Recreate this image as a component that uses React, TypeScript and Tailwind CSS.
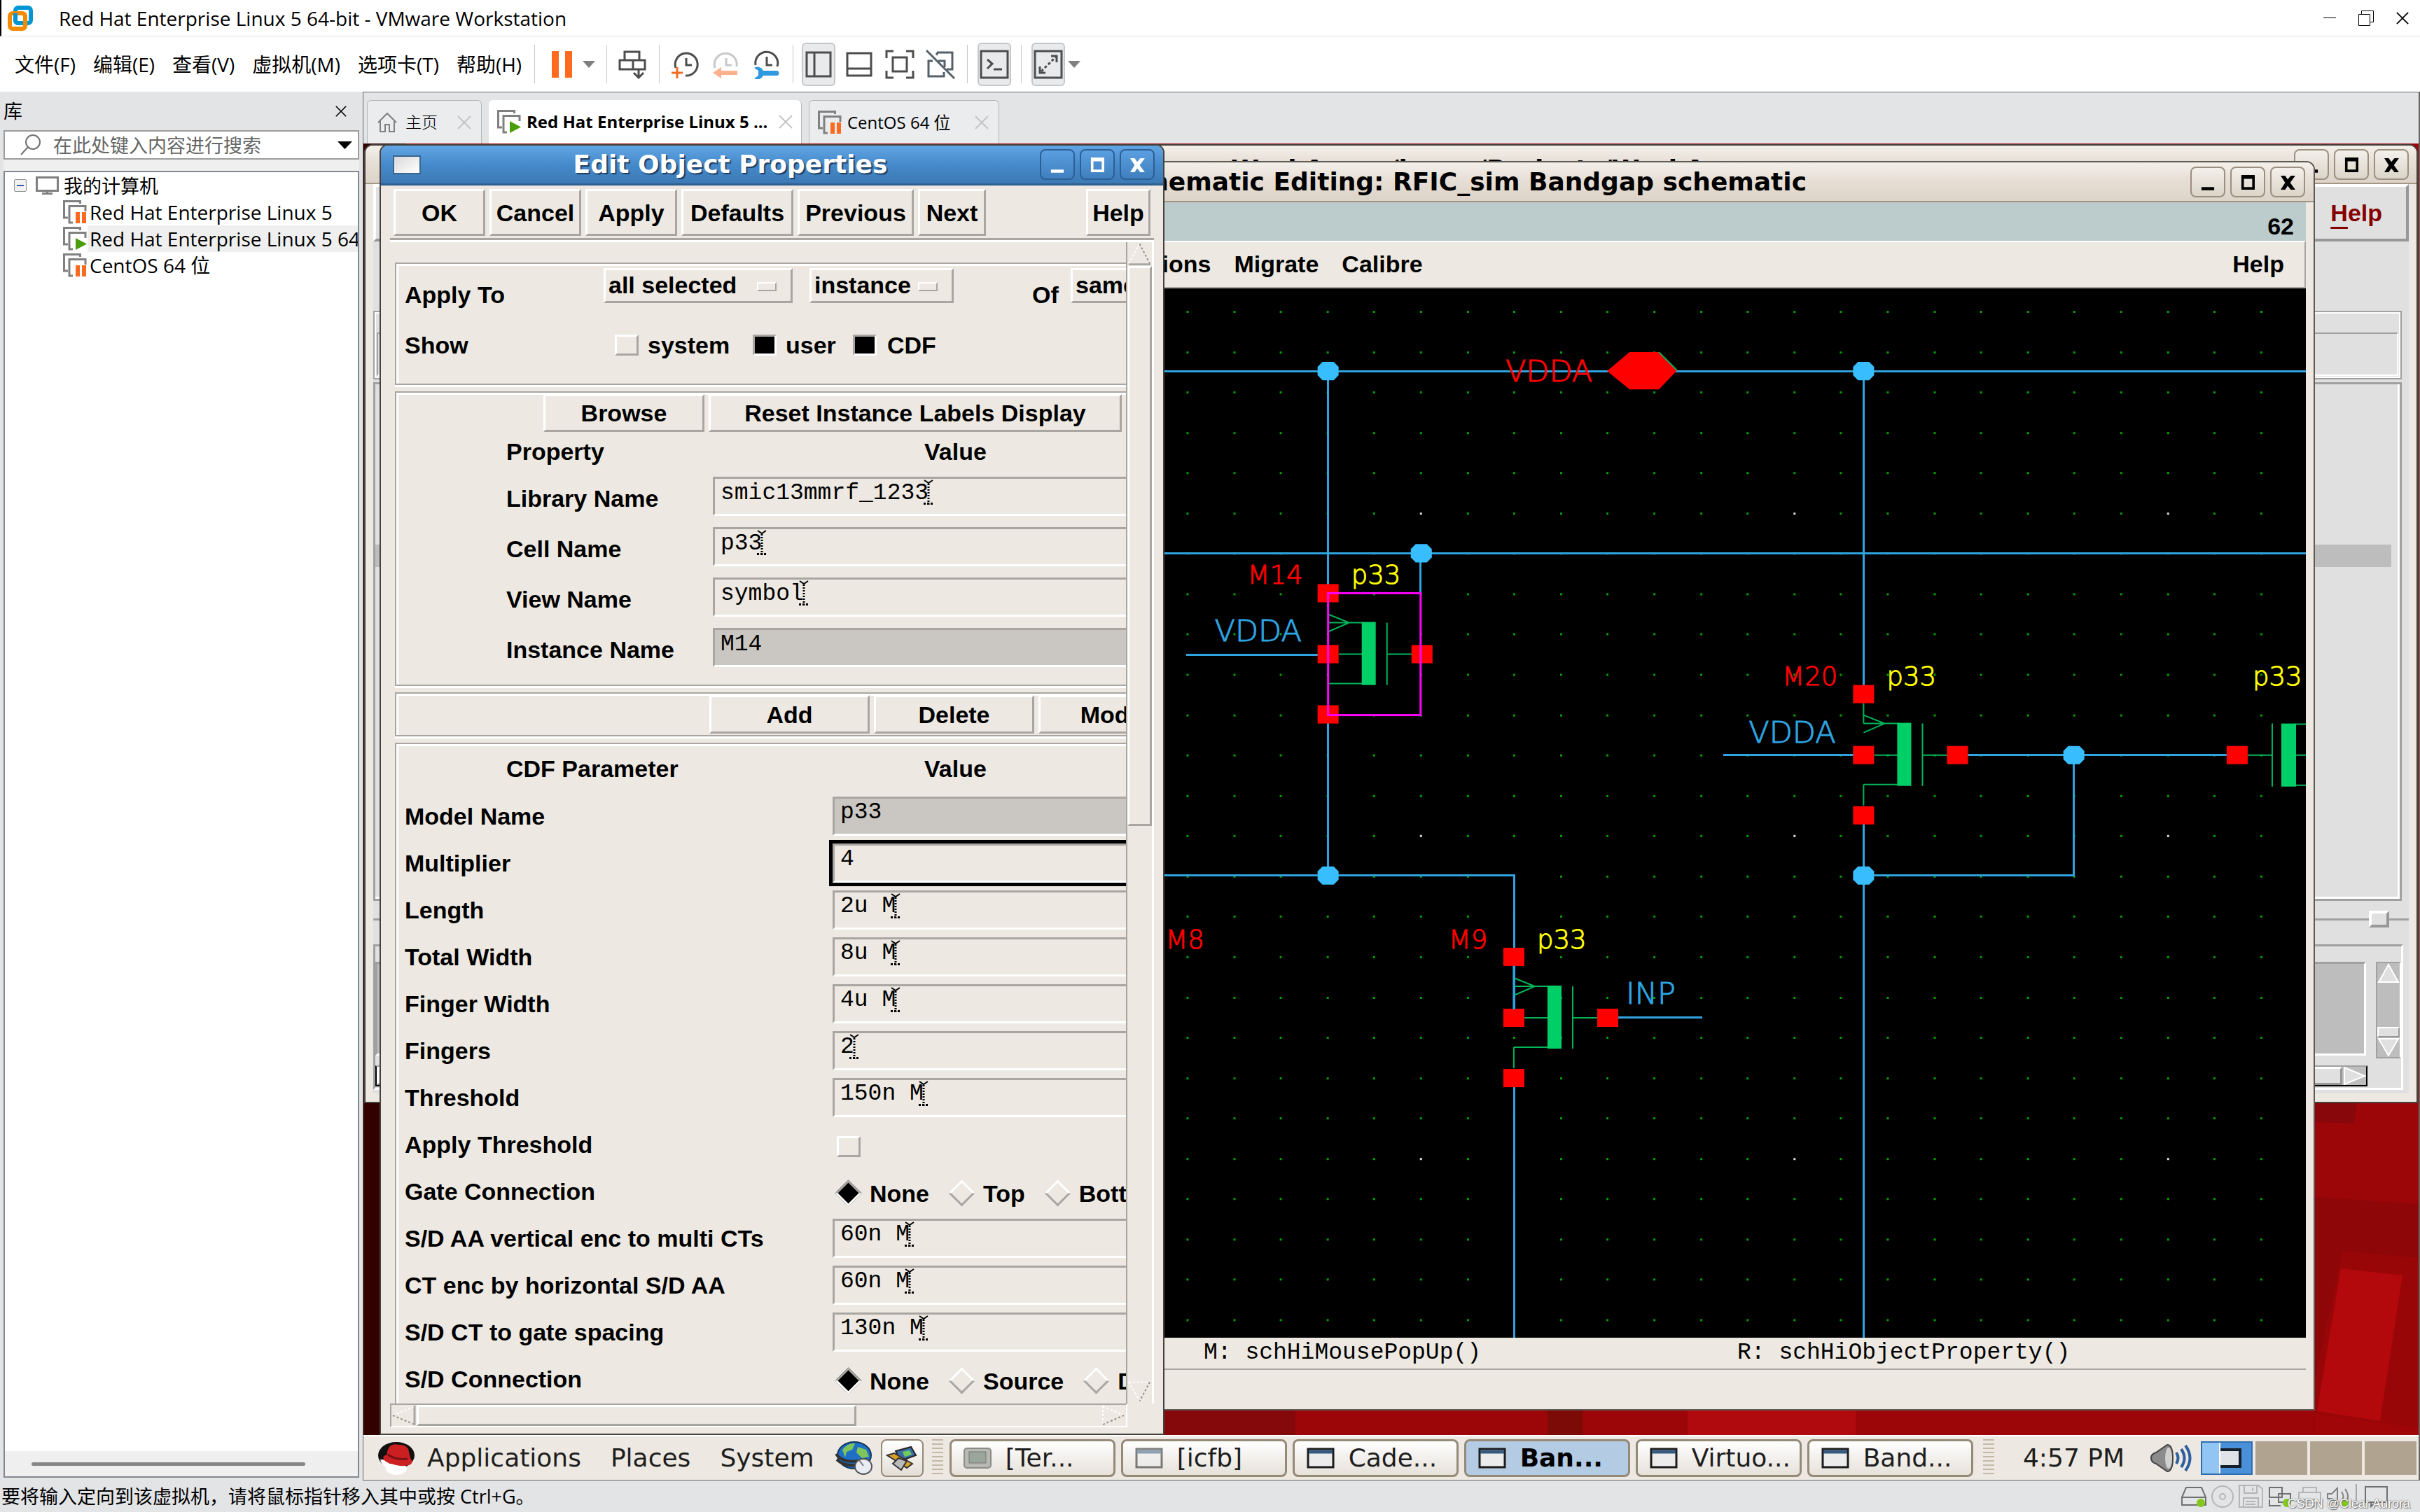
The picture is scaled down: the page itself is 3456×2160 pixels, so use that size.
import type { ReactNode } from "react";

const menus = ["文件(F)", "编辑(E)", "查看(V)", "虚拟机(M)", "选项卡(T)", "帮助(H)"];

const machines = [
  { name: "Red Hat Enterprise Linux 5", running: false, selected: false },
  { name: "Red Hat Enterprise Linux 5 64", running: true, selected: true },
  { name: "CentOS 64 位", running: false, selected: false },
];

interface Field {
  label: string;
  value?: string;
  kind?: "readonly" | "focused" | "check" | "radio";
  options?: string[];
}

const instanceFields: Field[] = [
  { label: "Library Name", value: "smic13mmrf_1233" },
  { label: "Cell Name", value: "p33" },
  { label: "View Name", value: "symbol" },
  { label: "Instance Name", value: "M14", kind: "readonly" },
];

const cdfFields: Field[] = [
  { label: "Model Name", value: "p33", kind: "readonly" },
  { label: "Multiplier", value: "4", kind: "focused" },
  { label: "Length", value: "2u M" },
  { label: "Total Width", value: "8u M" },
  { label: "Finger Width", value: "4u M" },
  { label: "Fingers", value: "2" },
  { label: "Threshold", value: "150n M" },
  { label: "Apply Threshold", kind: "check" },
  { label: "Gate Connection", kind: "radio", options: ["None", "Top", "Bottom"] },
  { label: "S/D AA vertical enc to multi CTs", value: "60n M" },
  { label: "CT enc by horizontal S/D AA", value: "60n M" },
  { label: "S/D CT to gate spacing", value: "130n M" },
  { label: "S/D Connection", kind: "radio", options: ["None", "Source", "Drain"] },
];

const tasks = [
  { label: "[Ter...", icon: "terminal", active: false },
  { label: "[icfb]", icon: "dim", active: false },
  { label: "Cade...", icon: "window", active: false },
  { label: "Ban...", icon: "window", active: true },
  { label: "Virtuo...", icon: "window", active: false },
  { label: "Band...", icon: "window", active: false },
];

/* ---------- host chrome ---------- */

function VmwareLogo() {
  return (
    <svg className="h-[38px] w-[38px]" viewBox="0 0 38 38" fill="none" strokeWidth="6">
      <rect x="12" y="4" width="22" height="22" rx="4" stroke="#0095d3" />
      <rect x="4" y="12" width="22" height="22" rx="4" stroke="#f38b00" />
      <path d="M12 12v10a4 4 0 0 0 4 4h6" stroke="#0095d3" />
    </svg>
  );
}

function VmIcon({ running }: { running: boolean }) {
  return (
    <svg className="h-[34px] w-[34px] shrink-0" viewBox="0 0 34 34" fill="none">
      <path d="M7 25H1.500V1.500h23V5" stroke="#808080" strokeWidth="3" />
      <path d="M14 32H9V8.500h23V16" stroke="#808080" strokeWidth="3" />
      {running ? (
        <path d="M18 16l16 8.500L18 33z" fill="#4a9e0c" />
      ) : (
        <path d="M18 17h6v16h-6zM27 17h6v16h-6z" fill="#ff6a1f" />
      )}
    </svg>
  );
}

function Cross({ className }: { className: string }) {
  return (
    <svg className={className} viewBox="0 0 20 20" fill="none" stroke="currentColor" strokeWidth="2">
      <path d="M1 1l18 18M19 1L1 19" />
    </svg>
  );
}

function Divider() {
  return <span className="h-[55px] w-px shrink-0 bg-[#c8c8c8]" />;
}

function ToolButton({ label, pressed, children }: { label: string; pressed?: boolean; children: ReactNode }) {
  return (
    <button
      aria-label={label}
      className={`flex h-[62px] w-[48px] shrink-0 items-center justify-center ${
        pressed ? "rounded-md border-2 border-[#c6c7c9] bg-[#e9eaec]" : ""
      }`}
    >
      {children}
    </button>
  );
}

function Icon({ children }: { children: ReactNode }) {
  return (
    <svg className="h-[42px] w-[42px] shrink-0" viewBox="0 0 42 42" fill="none" stroke="#4d4d4d" strokeWidth="3">
      {children}
    </svg>
  );
}

function TitleBar() {
  return (
    <header className="flex h-[52px] shrink-0 items-center border-b border-[#e1e1e1] border-l-2 border-l-black pl-2">
      <VmwareLogo />
      <h1 className="ml-9 text-[28px]">Red Hat Enterprise Linux 5 64-bit - VMware Workstation</h1>
      <div className="ml-auto flex items-center gap-[32px] pr-4">
        <button aria-label="Minimize" className="flex h-[22px] w-[18px] items-center">
          <span className="h-px w-full bg-black" />
        </button>
        <button aria-label="Restore">
          <svg className="h-[22px] w-[22px]" viewBox="0 0 22 22" fill="none" stroke="#000">
            <path d="M.5 5.500h16v16H.5zM4.500 5V.5h17v16H17" />
          </svg>
        </button>
        <button aria-label="Close">
          <Cross className="h-[18px] w-[18px]" />
        </button>
      </div>
    </header>
  );
}

function Toolbar() {
  return (
    <div className="flex h-[79px] shrink-0 items-center pl-[21px]">
      <nav className="flex shrink-0 gap-[25px] text-[28px]">
        {menus.map((m) => (
          <button key={m} className="whitespace-nowrap">
            {m}
          </button>
        ))}
      </nav>
      <div className="ml-[18px] flex items-center">
        <Divider />
        <button aria-label="Suspend" className="ml-6 flex items-center">
          <svg className="h-[38px] w-[30px]" viewBox="0 0 30 38" fill="#ff6a1f">
            <path d="M0 0h10v38H0zM19 0h10v38H19z" />
          </svg>
          <svg className="ml-[14px] h-[10px] w-[18px]" viewBox="0 0 18 10" fill="#808080">
            <path d="M0 0h18l-9 10z" />
          </svg>
        </button>
        <span className="w-4" />
        <Divider />
        <span className="w-3" />
        <ToolButton label="Send Ctrl+Alt+Del">
          <Icon>
            <path d="M10 15V3h21v12M3 15h36v13H3zM22 15v13M30 28v12M23 33l7 7 7-7" />
          </Icon>
        </ToolButton>
        <span className="w-[14px]" />
        <Divider />
        <span className="w-[12px]" />
        <ToolButton label="Take snapshot">
          <Icon>
            <path d="M8 26A16 16 0 1 1 22 37M23 12v10h8" />
            <path d="M10 25v16M2 33h16" stroke="#f26a21" />
          </Icon>
        </ToolButton>
        <span className="w-[10px]" />
        <ToolButton label="Revert snapshot">
          <Icon>
            <path d="M6 26A16 16 0 1 1 37 24M22 12v10h8" stroke="#c8c8c8" />
            <path d="M3 33l12-8v5h23v6H15v5z" fill="#ffb08c" stroke="none" />
          </Icon>
        </ToolButton>
        <span className="w-[10px]" />
        <ToolButton label="Manage snapshots">
          <Icon>
            <path d="M6 22A16 16 0 1 1 37 24M22 10v12h8" />
            <path d="M4 26a9 9 0 0 1 13 4h19a3.500 3.500 0 0 1 0 7H17a9 9 0 0 1-13 4l6-4v-7z" fill="#2f9ae0" stroke="none" />
          </Icon>
        </ToolButton>
        <span className="w-[14px]" />
        <Divider />
        <span className="w-3" />
        <ToolButton label="Show library" pressed>
          <Icon>
            <path d="M4 4h34v34H4zM15 4v34" />
          </Icon>
        </ToolButton>
        <span className="w-[10px]" />
        <ToolButton label="Show thumbnails">
          <Icon>
            <path d="M4 5h34v32H4zM4 27h34" />
          </Icon>
        </ToolButton>
        <span className="w-[10px]" />
        <ToolButton label="Full screen">
          <Icon>
            <path d="M11 11h20v20H11zM2 12V2h10M30 2h10v10M40 30v10H30M12 40H2V30" />
          </Icon>
        </ToolButton>
        <span className="w-[10px]" />
        <ToolButton label="Unity">
          <Icon>
            <path d="M16 4h22v24h-8M10 16H4v22h22v-6M16 4v4M1 1l40 40M18 16h9v9" stroke="#55606b" />
          </Icon>
        </ToolButton>
        <span className="w-[14px]" />
        <Divider />
        <span className="w-[14px]" />
        <ToolButton label="Console view" pressed>
          <Icon>
            <path d="M2 2h38v38H2zM11 14l7 6-7 7M20 28h12" />
          </Icon>
        </ToolButton>
        <span className="w-[14px]" />
        <Divider />
        <span className="w-[14px]" />
        <ToolButton label="Stretch guest" pressed>
          <Icon>
            <path d="M2 2h38v38H2z" />
            <path d="M25 9h8v9M9 24v9h8" />
            <path d="M11 31L32 10" strokeDasharray="4 3" />
          </Icon>
        </ToolButton>
        <svg className="ml-1 h-[10px] w-[18px]" viewBox="0 0 18 10" fill="#808080">
          <path d="M0 0h18l-9 10z" />
        </svg>
      </div>
    </div>
  );
}

function Library() {
  return (
    <aside className="flex w-[518px] shrink-0 flex-col pr-[5px] pb-1 pl-[5px]">
      <div className="flex h-[55px] shrink-0 items-center justify-between pr-[18px]">
        <h2>库</h2>
        <button aria-label="Close library">
          <Cross className="h-[16px] w-[16px]" />
        </button>
      </div>
      <div className="flex h-[42px] shrink-0 items-center border-2 border-[#9c9c9c] bg-white pr-2 pl-[22px]">
        <svg className="h-[30px] w-[30px] shrink-0" viewBox="0 0 30 30" fill="none" stroke="#707070" strokeWidth="2">
          <circle cx="18" cy="11" r="10" />
          <path d="M11 18L1 29" />
        </svg>
        <input
          aria-label="搜索"
          placeholder="在此处键入内容进行搜索"
          className="ml-[17px] min-w-0 flex-1 bg-transparent outline-none placeholder:text-[#666]"
        />
        <svg className="h-[11px] w-[21px]" viewBox="0 0 21 11">
          <path d="M0 0h21L10.500 11z" />
        </svg>
      </div>
      <div className="h-[16px] shrink-0 bg-[#efefef]" />
      <div className="flex min-h-0 flex-1 flex-col border-2 border-[#828790] bg-white">
        <ul className="min-h-0 flex-1 overflow-hidden">
          <li className="flex h-[38px] items-center pl-[13px]">
            <button aria-label="Collapse" className="flex h-[18px] w-[18px] items-center justify-center rounded-xs border border-[#919191] bg-[#f2f2f2]">
              <span className="h-[2px] w-[10px] bg-[#3c5aa8]" />
            </button>
            <svg className="ml-[13px] h-[26px] w-[33px]" viewBox="0 0 33 26" fill="none" stroke="#808080" strokeWidth="3">
              <path d="M1.500 1.500h30v19h-30zM16.500 20v5M9 24.500h15" />
            </svg>
            <span className="ml-[7px]">我的计算机</span>
          </li>
          {machines.map((m) => (
            <li key={m.name} className="flex h-[38px] items-center pl-[83px]">
              <VmIcon running={m.running} />
              <span
                className={`ml-px min-w-0 flex-1 overflow-hidden pl-[3px] text-[28px] leading-[38px] whitespace-nowrap ${
                  m.selected ? "bg-[#efefef]" : ""
                }`}
              >
                {m.name}
              </span>
            </li>
          ))}
        </ul>
        <div className="flex h-[36px] items-center bg-[#efefef] pl-[38px]">
          <span className="h-[5px] w-[391px] rounded-full bg-[#868686]" />
        </div>
      </div>
    </aside>
  );
}

function VmTabs() {
  return (
    <div role="tablist" className="flex h-[73px] shrink-0 items-end gap-[10px] pl-[5px] text-[24px]">
      <div role="tab" className="flex h-[62px] w-[164px] items-center rounded-t-md border border-b-0 border-[#b4b5b7] bg-[#ebecee] pl-[13px]">
        <svg className="h-[30px] w-[30px]" viewBox="0 0 30 30" fill="none" stroke="#808080" strokeWidth="2">
          <path d="M2 15L15 2l13 13M5 12v16h7V18h6v10h7V12" />
        </svg>
        <span className="ml-[11px] text-[23px] font-light">主页</span>
        <Cross className="ml-auto mr-[14px] h-[20px] w-[20px] text-[#c4c4c4]" />
      </div>
      <div role="tab" aria-selected="true" className="flex h-[62px] w-[447px] items-center rounded-t-md border-r border-[#b4b5b7] bg-white pl-3">
        <VmIcon running />
        <span className="ml-[8px] font-bold whitespace-nowrap">Red Hat Enterprise Linux 5 ...</span>
        <Cross className="ml-auto mr-3 h-[20px] w-[20px] text-[#c4c4c4]" />
      </div>
      <div role="tab" className="flex h-[62px] w-[272px] items-center rounded-t-md border border-b-0 border-[#b4b5b7] bg-[#ebecee] pl-3">
        <VmIcon running={false} />
        <span className="ml-[8px]">CentOS 64 位</span>
        <Cross className="ml-auto mr-[14px] h-[20px] w-[20px] text-[#c4c4c4]" />
      </div>
    </div>
  );
}

function StatusBar() {
  return (
    <footer className="relative flex h-[45px] shrink-0 items-center pr-[44px] pl-[2px]">
      <p>要将输入定向到该虚拟机，请将鼠标指针移入其中或按 Ctrl+G。</p>
      <svg className="ml-auto h-[36px] w-[298px]" viewBox="0 0 298 36" fill="none" strokeWidth="2">
        <g stroke="#707070">
          <path d="M2 19L8 5h22l6 14v11H2zM2 19h34" />
          <path d="M127 5h18v14h-18zM140 14h17v12h-17zM127 22v9h16" />
          <path d="M264 4h31v22h-31zM272 26v6l7-6" />
        </g>
        <g stroke="#b4b5b7">
          <circle cx="60" cy="18" r="15" />
          <circle cx="60" cy="18" r="4" />
          <path d="M84 2h27l6 5v26H84zM91 2v11h18V2M90 33V20h21v13M93 25h14M93 29h14M103 5v5" />
          <path d="M169 12h31v15h-31zM175 12V5h19v7M175 22h19v10h-19z" />
        </g>
        <path d="M210 14h6l8-8v23l-8-8h-6zM230 11q5 7 0 13M235 7q8 11 0 21" stroke="#808080" />
        <path d="M251 0v36" stroke="#a6a6a6" />
        <g fill="#84c81e">
          <circle cx="29" cy="27" r="6" />
          <circle cx="152" cy="27" r="6" />
          <circle cx="234" cy="27" r="6" />
        </g>
      </svg>
      <span className="absolute right-[14px] bottom-[3px] font-['Liberation_Sans',sans-serif] text-[18px] text-white [text-shadow:0_0_2px_#555,1px_1px_1px_#777]">
        CSDN @Clear Aurora
      </span>
    </footer>
  );
}

/* ---------- guest windows ---------- */

function FrameButtons({ blue }: { blue?: boolean }) {
  const look = blue
    ? "border-[#2c5f94] bg-linear-to-b from-[#5a9fe0] to-[#3f7fbe] text-white"
    : "border-[#9b8f80] bg-linear-to-b from-[#f3f0eb] to-[#dcd4c8] text-black";
  return (
    <div className="flex shrink-0 gap-[7px]">
      {[
        ["Minimize", "M14 30h20v5H14z"],
        ["Maximize", "M14 11h21v23H14zM18 17v13h13V17z"],
        ["Close", "M13 12h7l4 6 5-6h7l-8 11 8 11h-7l-5-6-4 6h-7l7-11z"],
      ].map(([name, d]) => (
        <button key={name} aria-label={name} className={`h-[44px] w-[50px] rounded-lg border-2 ${look}`}>
          <svg className="h-full w-full" viewBox="0 0 48 44" fill="currentColor" fillRule="evenodd">
            <path d={d} />
          </svg>
        </button>
      ))}
    </div>
  );
}

function MotifButton({ className, children }: { className: string; children: ReactNode }) {
  return (
    <button
      className={`shrink-0 border-3 border-t-white border-r-[#a9a5a0] border-b-[#a9a5a0] border-l-white text-center whitespace-nowrap ${className}`}
    >
      {children}
    </button>
  );
}

function OptionMenu({ label, value, className }: { label: string; value: string; className: string }) {
  return (
    <div className={`relative h-[50px] shrink-0 border-3 border-t-white border-r-[#a9a5a0] border-b-[#a9a5a0] border-l-white ${className}`}>
      <select aria-label={label} className="h-full w-full appearance-none pb-[3px] pl-[4px] outline-none">
        <option>{value}</option>
      </select>
      <span className="pointer-events-none absolute top-[17px] right-[20px] h-[13px] w-[28px] border-2 border-t-white border-r-[#a9a5a0] border-b-[#a9a5a0] border-l-white" />
    </div>
  );
}

function CheckBox({ id, checked }: { id: string; checked?: boolean }) {
  return (
    <input
      id={id}
      type="checkbox"
      defaultChecked={checked}
      className="h-[30px] w-[34px] shrink-0 appearance-none border-3 border-t-white border-r-[#a9a5a0] border-b-[#a9a5a0] border-l-white checked:border-t-[#a9a5a0] checked:border-r-white checked:border-b-white checked:border-l-[#a9a5a0] checked:bg-black"
    />
  );
}

function RadioGroup({ name, options }: { name: string; options: string[] }) {
  return (
    <div role="radiogroup" aria-label={name} className="flex shrink-0 items-center gap-[33px] pt-[6px] pl-[9px]">
      {options.map((o, i) => (
        <label key={o} className="flex items-center gap-[17px]">
          <input
            type="radio"
            name={name}
            defaultChecked={i === 0}
            className="size-[27px] rotate-45 appearance-none border-3 border-t-white border-r-[#a9a5a0] border-b-[#a9a5a0] border-l-white checked:border-t-[#a9a5a0] checked:border-r-white checked:border-b-white checked:border-l-[#a9a5a0] checked:bg-black"
          />
          {o}
        </label>
      ))}
    </div>
  );
}

function TextField({ id, value, kind }: { id: string; value: string; kind?: Field["kind"] }) {
  const look =
    kind === "readonly"
      ? "bg-[#cac6c1]"
      : kind === "focused"
        ? "outline-5 outline-black"
        : "";
  return (
    <div className="relative w-[760px] shrink-0 font-['Liberation_Mono',monospace] text-[33px] font-normal">
      <input
        id={id}
        defaultValue={value}
        readOnly={kind === "readonly"}
        className={`block h-[56px] w-full border-3 border-t-[#a9a5a0] border-r-white border-b-white border-l-[#a9a5a0] pb-[10px] pl-[8px] ${look}`}
      />
      {!kind && (
        <svg
          className="pointer-events-none absolute top-[4px] h-[36px] w-[14px]"
          style={{ left: `calc(${value.length}ch + 4px)` }}
          viewBox="0 0 14 36"
          stroke="#000"
          strokeWidth="3"
        >
          <path d="M1 1l6 4 6-4" fill="none" strokeWidth="2" />
          <path d="M7 6v30" strokeDasharray="2 2" />
          <path d="M0 34.500h14" strokeDasharray="3 2" />
        </svg>
      )}
    </div>
  );
}

function Group({ className, children }: { className: string; children: ReactNode }) {
  return (
    <section
      className={`w-[1400px] shrink-0 border-2 border-[#a9a5a0] shadow-[inset_3px_3px_0_#fff,0_3px_0_#fff] ${className}`}
    >
      {children}
    </section>
  );
}

function EditObjectProperties() {
  return (
    <div className="absolute top-[1px] bottom-0 left-[23px] flex w-[1121px] flex-col overflow-hidden rounded-t-xl border-2 border-[#45423d] bg-[#ede9e2]">
      <div className="flex h-[57px] shrink-0 items-center justify-between border-b-3 border-[#2e5f93] bg-linear-to-b from-[#62a5e4] via-[#468acb] to-[#3c79b4] pr-3 pl-[17px]">
        <span className="h-[27px] w-[40px] border-2 border-[#3a6690] bg-linear-to-br from-[#d9d9d9] to-white" />
        <h2 className="font-['DejaVu_Sans',sans-serif] text-[36px] font-bold text-white [text-shadow:2px_2px_1px_#1c3c60]">
          Edit Object Properties
        </h2>
        <FrameButtons blue />
      </div>

      <div className="flex min-h-0 flex-1 flex-col px-[13px] pb-[9px] font-['Liberation_Sans',sans-serif] text-[34px] font-bold">
        <div className="flex h-[78px] shrink-0 gap-[6px] border-b-3 border-[#a9a5a0] pt-[5px] pr-[5px] pb-[3px] pl-[5px] shadow-[0_3px_0_#fff]">
          <MotifButton className="w-[131px]">OK</MotifButton>
          <MotifButton className="w-[131px]">Cancel</MotifButton>
          <MotifButton className="w-[131px]">Apply</MotifButton>
          <MotifButton className="w-[160px]">Defaults</MotifButton>
          <MotifButton className="w-[166px]">Previous</MotifButton>
          <MotifButton className="w-[97px]">Next</MotifButton>
          <MotifButton className="ml-auto w-[92px]">Help</MotifButton>
        </div>

        <div className="flex min-h-0 flex-1 pt-[3px]">
          <div className="flex min-w-0 flex-1 flex-col gap-[9px] overflow-hidden border-r-2 border-[#a9a5a0] pt-[29px] pl-[7px]">
            <Group className="h-[175px]">
              <div className="flex h-[88px] items-center pl-[12px]">
                <span className="w-[284px]">Apply To</span>
                <div className="flex items-center gap-[24px] pb-[26px]">
                  <OptionMenu label="Apply to" value="all selected" className="w-[270px]" />
                  <OptionMenu label="Object type" value="instance" className="w-[206px]" />
                </div>
                <span className="ml-[112px] w-[55px]">Of</span>
                <div className="pb-[26px]">
                  <OptionMenu label="Of" value="same master" className="w-[290px]" />
                </div>
              </div>
              <div className="flex h-[56px] items-center pl-[12px]">
                <span className="w-[300px]">Show</span>
                <CheckBox id="show-system" />
                <label htmlFor="show-system" className="ml-[13px] w-[150px]">system</label>
                <CheckBox id="show-user" checked />
                <label htmlFor="show-user" className="ml-[13px] w-[96px]">user</label>
                <CheckBox id="show-cdf" checked />
                <label htmlFor="show-cdf" className="ml-[15px]">CDF</label>
              </div>
            </Group>

            <Group className="h-[421px]">
              <div className="flex gap-[6px] pt-[2px] pl-[210px]">
                <MotifButton className="h-[54px] w-[230px]">Browse</MotifButton>
                <MotifButton className="h-[54px] w-[590px]">Reset Instance Labels Display</MotifButton>
              </div>
              <div className="flex h-[56px] items-center pl-[157px]">
                <span className="w-[597px]">Property</span>
                <span>Value</span>
              </div>
              {instanceFields.map((f) => (
                <div key={f.label} className="flex h-[72px] items-center pl-[157px]">
                  <label htmlFor={f.label} className="w-[295px] shrink-0 pt-[6px]">{f.label}</label>
                  <TextField id={f.label} value={f.value ?? ""} kind={f.kind} />
                </div>
              ))}
            </Group>

            <Group className="flex h-[63px] gap-[6px] pt-[2px] pl-[447px]">
              <MotifButton className="h-[55px] w-[229px]">Add</MotifButton>
              <MotifButton className="h-[55px] w-[229px]">Delete</MotifButton>
              <MotifButton className="h-[55px] w-[229px]">Modify</MotifButton>
            </Group>

            <Group className="h-[1000px]">
              <div className="flex h-[69px] items-center pl-[157px]">
                <span className="w-[597px]">CDF Parameter</span>
                <span>Value</span>
              </div>
              {cdfFields.map((f) => (
                <div key={f.label} className="flex h-[67px] items-center pl-[12px]">
                  <label htmlFor={f.label} className="w-[611px] shrink-0">{f.label}</label>
                  {f.kind === "check" && (
                    <span className="flex pt-[6px] pl-[6px]">
                      <CheckBox id={f.label} />
                    </span>
                  )}
                  {f.kind === "radio" && <RadioGroup name={f.label} options={f.options ?? []} />}
                  {f.value && <TextField id={f.label} value={f.value} kind={f.kind} />}
                </div>
              ))}
            </Group>
          </div>

          {/* vertical scroll bar */}
          <div className="flex w-[38px] shrink-0 flex-col border-r-3 border-white">
            <svg className="h-[34px] w-full shrink-0" viewBox="0 0 36 34" fill="none" strokeWidth="2" strokeDasharray="3 3">
              <path d="M18 2L2 31" stroke="#fff" />
              <path d="M18 2l15 29" stroke="#8f8b86" />
              <path d="M2 32h32" stroke="#a9a5a0" strokeWidth="3" strokeDasharray="none" />
            </svg>
            <span className="h-[800px] border-3 border-t-white border-r-[#a9a5a0] border-b-[#a9a5a0] border-l-white" />
            <svg className="mt-auto h-[34px] w-full shrink-0" viewBox="0 0 36 34" fill="none" strokeWidth="2" strokeDasharray="3 3">
              <path d="M2 3h32M2 3l16 28" stroke="#fff" />
              <path d="M33 3L18 31" stroke="#8f8b86" />
            </svg>
          </div>
        </div>

        {/* horizontal scroll bar */}
        <div className="mr-[38px] flex h-[34px] shrink-0 border-2 border-t-[#a9a5a0] border-r-white border-b-white border-l-[#a9a5a0]">
          <svg className="h-full w-[36px] shrink-0" viewBox="0 0 36 30" fill="none" strokeWidth="2" strokeDasharray="3 3">
            <path d="M2 15L33 2" stroke="#fff" />
            <path d="M2 15l31 13" stroke="#8f8b86" />
            <path d="M33 1v28" stroke="#a9a5a0" strokeWidth="3" strokeDasharray="none" />
          </svg>
          <span className="w-[628px] border-3 border-t-white border-r-[#a9a5a0] border-b-[#a9a5a0] border-l-white" />
          <svg className="ml-auto h-full w-[36px] shrink-0" viewBox="0 0 36 30" fill="none" strokeWidth="2" strokeDasharray="3 3">
            <path d="M3 1v28M3 2l30 13" stroke="#fff" />
            <path d="M3 28l30-13" stroke="#8f8b86" />
          </svg>
        </div>
      </div>
    </div>
  );
}

/* ---------- schematic ---------- */

const wire = "#2fa4e0";
const green = "#00b45a";

function Junction({ x, y }: { x: number; y: number }) {
  return <path d={`M${x - 8} ${y - 13}h16l7 7v12l-7 7h-16l-7-7v-12z`} fill="#38bdff" />;
}

function Pin({ x, y }: { x: number; y: number }) {
  return <rect x={x - 15} y={y - 13} width="30" height="26" fill="#f00" />;
}

function Pmos({ x, y, leads }: { x: number; y: number; leads?: boolean }) {
  return (
    <g transform={`translate(${x} ${y})`}>
      <g stroke={green} strokeWidth="2" fill="none">
        <path d="M0 30l30 12L0 55M0 42h50M15 87h34M0 129h50M84 42v89M84 87h36" />
        {leads && <path d="M0 13v29M0 129v30" />}
      </g>
      <rect x="48" y="41" width="20" height="90" fill="#00cf68" />
      <Pin x={0} y={0} />
      <Pin x={0} y={87} />
      <Pin x={0} y={173} />
      <Pin x={134} y={87} />
    </g>
  );
}

function Schematic() {
  const dots = [];
  for (let c = -6; c < 25; c++) {
    for (let r = 0; r < 26; r++) {
      const bright = (c - 5) % 8 === 0 && (r - 5) % 8 === 0;
      dots.push(
        <rect
          key={`${c}-${r}`}
          x={Math.round(1695 + c * 66.6)}
          y={Math.round(444 + r * 57.56)}
          width="3"
          height="3"
          fill={bright ? "#ddd" : "#00a000"}
        />
      );
    }
  }
  return (
    <svg
      className="block min-h-0 w-full flex-1 bg-black font-['DejaVu_Sans',sans-serif] font-extralight"
      viewBox="1233 412 2059 1500"
      preserveAspectRatio="xMaxYMin slice"
    >
      {dots}
      <g stroke={wire} strokeWidth="3" fill="none" shapeRendering="crispEdges">
        <path d="M1233 530h2059M1233 790h2059M1233 1250h930v116M2163 1366v87M2163 1540v372" />
        <path d="M1897 530v318M1897 1021v229M2029 790v57M1695 935h200" />
        <path d="M2661 530v462M2661 1164v748M2461 1078h200M2795 1078h400M2961 1078v172h-300" />
        <path d="M2297 1452h134" />
      </g>
      <Pmos x={1897} y={847} />
      <Pmos x={2162} y={1366} leads />
      <Pmos x={2661} y={991} leads />
      <path d="M2162 1379v62" stroke={wire} strokeWidth="3" />
      <g stroke={green} strokeWidth="2">
        <path d="M3209 1078h35M3244 1033v90M3277 1034h16M3277 1078h16M3277 1121h16" />
      </g>
      <rect x="3257" y="1033" width="21" height="90" fill="#00cf68" />
      <Pin x={3194} y={1078} />
      <rect x="1897" y="847" width="132" height="174" fill="none" stroke="#f0f" strokeWidth="3" />
      <path d="M2295 530l32-27h42l26 26-26 27h-42z" fill="#f00" />
      <path d="M2369 503l26 26" stroke={green} strokeWidth="2" />
      <Junction x={1897} y={530} />
      <Junction x={2030} y={790} />
      <Junction x={1897} y={1250} />
      <Junction x={2661} y={530} />
      <Junction x={2661} y={1250} />
      <Junction x={2961} y={1078} />

      <g fill="#f00" stroke="#f00" fontSize="37">
        <text x="1782" y="834">M14</text>
        <text x="1665" y="1354">M8</text>
        <text x="2069" y="1354">M9</text>
        <text x="2545" y="978">M20</text>
        <text x="2150" y="545" fontSize="43">VDDA</text>
      </g>
      <g fill="#ff0" stroke="#ff0" fontSize="37">
        <text x="1930" y="834">p33</text>
        <text x="2195" y="1354">p33</text>
        <text x="2694" y="978">p33</text>
        <text x="3216" y="978">p33</text>
      </g>
      <g fill={wire} stroke={wire} fontSize="43">
        <text x="1735" y="916">VDDA</text>
        <text x="2497" y="1060">VDDA</text>
        <text x="2322" y="1433">INP</text>
      </g>
    </svg>
  );
}

function SchematicWindow() {
  return (
    <div className="absolute top-[25px] right-[148px] bottom-[35px] left-[700px] flex flex-col overflow-hidden rounded-t-xl border-2 border-[#5e5a54] bg-[#ede9e2] px-[11px]">
      <div className="-mx-[11px] flex h-[57px] shrink-0 items-center justify-end border-b-2 border-[#a39684] bg-linear-to-b from-[#f3f0ea] via-[#e6ddd4] to-[#dcd4c8] pr-3">
        <h2 className="mr-[548px] font-['DejaVu_Sans',sans-serif] text-[36px] font-bold whitespace-nowrap">
          Virtuoso® Schematic Editing: RFIC_sim Bandgap schematic
        </h2>
        <FrameButtons />
      </div>
      <div className="flex min-h-0 flex-1 flex-col font-['Liberation_Sans',sans-serif] text-[34px] font-bold">
        <div className="flex h-[55px] shrink-0 items-center justify-end bg-[#bccccc] pt-[12px] pr-[17px]">62</div>
        <div className="flex h-[68px] shrink-0 items-center gap-[33px] border-2 border-t-white border-r-[#a9a5a0] border-b-[#a9a5a0] border-l-white pr-[29px] pb-[2px] pl-[367px]">
          <button>Options</button>
          <button>Migrate</button>
          <button>Calibre</button>
          <button className="ml-auto">Help</button>
        </div>
        <Schematic />
        <div className="flex h-[46px] shrink-0 items-center border-b-2 border-[#a9a5a0] pb-[2px] pl-[487px] font-['Liberation_Mono',monospace] text-[33px] font-normal whitespace-pre">
          <span className="w-[762px]">M: schHiMousePopUp()</span>
          <span>R: schHiObjectProperty()</span>
        </div>
        <div className="h-[56px] shrink-0" />
      </div>
    </div>
  );
}

function IcfbWindow() {
  return (
    <div className="absolute top-[1px] right-[1px] left-[1px] flex h-[1370px] flex-col overflow-hidden rounded-t-xl border-2 border-[#45423d] bg-[#ede9e2] px-[11px] pb-[12px]">
      <div className="-mx-[11px] flex h-[55px] shrink-0 items-center justify-end border-b-2 border-[#a39684] bg-linear-to-b from-[#f3f0ea] via-[#e6ddd4] to-[#dcd4c8] pr-[11px]">
        <h2 className="mr-[775px] pt-[14px] font-['DejaVu_Sans',sans-serif] text-[36px] font-bold whitespace-nowrap">
          Library Manager: WorkArea: /home/Projects/WorkArea
        </h2>
        <FrameButtons />
      </div>
      <div className="flex min-h-0 flex-1 flex-col bg-[#e0e0e0] font-['Liberation_Sans',sans-serif] text-[34px] font-bold">
        <div className="flex h-[82px] shrink-0 items-center justify-end border-4 border-t-white border-r-[#989898] border-b-[#989898] border-l-white pr-[34px] text-[#850000]">
          <button>
            <span className="underline underline-offset-8">H</span>elp
          </button>
        </div>
        <div className="mt-[99px] mr-[10px] flex h-[98px] shrink-0 flex-col justify-end border-2 border-[#a0a0a0] p-[3px] shadow-[inset_0_0_0_2px_#fff]">
          <div className="h-[62px] border-2 border-t-[#a0a0a0] border-r-white border-b-white border-l-[#a0a0a0]" />
        </div>
        <div className="mt-[4px] mr-[10px] flex h-[741px] shrink-0 flex-col border-3 border-[#a0a0a0] pt-[229px] pr-[12px] shadow-[inset_-3px_-3px_0_#fff]">
          <span className="h-[32px] bg-[#bdbdbd]" />
        </div>
        <div className="mt-[14px] flex h-[24px] shrink-0 items-center">
          <span className="h-[3px] flex-1 bg-[#a0a0a0]" />
          <span className="h-[24px] w-[29px] border-4 border-t-white border-r-[#989898] border-b-[#989898] border-l-white" />
          <span className="h-[3px] w-[28px] bg-[#a0a0a0]" />
        </div>
        <div className="mt-[24px] mr-[8px] flex h-[208px] shrink-0 border-3 border-t-[#a0a0a0] border-r-white border-b-white border-l-[#a0a0a0] pt-[22px]">
          <div className="flex flex-1 flex-col">
            <div className="mr-[14px] h-[134px] border-3 border-t-[#a0a0a0] border-r-white border-b-white border-l-[#a0a0a0] bg-[#bdbdbd]" />
            <div className="mt-[14px] mr-[12px] flex h-[30px] border-2 border-t-[#a0a0a0] bg-[#bdbdbd]">
              <span className="flex-1 border-3 border-t-white border-r-[#989898] border-b-[#989898] border-l-white bg-[#e0e0e0]" />
              <svg className="h-full w-[34px]" viewBox="0 0 34 26">
                <path d="M3 1l29 12L3 25z" fill="#e0e0e0" stroke="#fff" strokeWidth="2" />
              </svg>
            </div>
          </div>
          <div className="flex h-[138px] w-[36px] flex-col border-2 border-[#a0a0a0] border-r-white bg-[#bdbdbd]">
            <svg className="h-[28px] w-full" viewBox="0 0 32 28">
              <path d="M16 2l14 25H2z" fill="#e0e0e0" stroke="#fff" strokeWidth="2" />
            </svg>
            <span className="mt-auto h-[15px] border-2 border-t-white border-r-[#989898] border-b-[#989898] border-l-white bg-[#e0e0e0]" />
            <svg className="h-[28px] w-full" viewBox="0 0 32 28">
              <path d="M16 26L2 2h28z" fill="#e0e0e0" stroke="#fff" strokeWidth="2" />
            </svg>
          </div>
        </div>
      </div>
    </div>
  );
}

function Wallpaper() {
  return (
    <svg className="absolute inset-0 h-full w-full" viewBox="0 0 2933 1845" preserveAspectRatio="none">
      <rect width="2933" height="1845" fill="#9c0608" />
      <rect width="60" height="1845" fill="#330000" />
      <path d="M1100 1800h230v45h-230z" fill="#85080a" />
      <path d="M1690 1800h50v45h-50z" fill="#7c0a06" />
      <path d="M1890 1800h240v45h-240z" fill="#b00a0e" />
      <path d="M2785 1370h60l-4 30-56-2z" fill="#87070a" />
      <path d="M2785 1505l148 10v330h-148z" fill="#8e0608" />
      <path d="M2825 1582l108 10v253h-148v-80z" fill="#980608" />
      <path d="M2822 1607l88 10-32 208-90-14z" fill="#b3090c" />
      <path d="M2785 1815l148 20v10h-148z" fill="#a00608" />
    </svg>
  );
}

function GnomePanel() {
  return (
    <div className="flex h-[64px] shrink-0 items-center border-t-2 border-white bg-[#ede9e2] pr-[3px] pl-[20px] font-['DejaVu_Sans',sans-serif] text-[36px] text-[#1e1e1e]">
      <svg className="h-[48px] w-[55px] shrink-0" viewBox="0 0 55 48">
        <ellipse cx="27" cy="20" rx="26" ry="19" fill="#111" />
        <ellipse cx="27" cy="39" rx="15" ry="9" fill="#fff" />
        <path d="M4 26q2 9 12 13l2-12z" fill="#fff" />
        <path d="M9 21q-3 7 10 11 15 5 26 2 8-3 2-10l-3-13Q40 4 30 5q-8-2-12 2-5 6-4 12z" fill="#cc1f22" />
        <path d="M15 19q10 8 28 6" stroke="#7c1012" strokeWidth="3" fill="none" />
      </svg>
      <nav className="ml-[16px] flex shrink-0 gap-[42px]">
        <button>Applications</button>
        <button>Places</button>
        <button>System</button>
      </nav>
      <svg className="ml-[28px] h-[48px] w-[58px] shrink-0" viewBox="0 0 58 48">
        <ellipse cx="29" cy="20" rx="24" ry="19" fill="#1f6fc4" stroke="#12345c" strokeWidth="2" />
        <path d="M12 12q8-10 18-9l-4 9-8 3-2 8zM34 8l12 4 4 10-10 2-8-8z" fill="#7fc65a" />
        <path d="M3 18q10 16 44 8M4 26q14 14 44 4" stroke="#333" strokeWidth="4" fill="none" />
        <ellipse cx="42" cy="36" rx="12" ry="11" fill="#e9ecf2" stroke="#555" strokeWidth="2" />
        <path d="M36 27l6 8" stroke="#777" strokeWidth="2" />
      </svg>
      <button aria-label="Launcher" className="ml-[9px] flex h-[54px] w-[61px] shrink-0 items-center justify-center rounded-lg border-2 border-[#958978] bg-linear-to-b from-white to-[#e3ded6]">
        <svg className="h-[36px] w-[46px]" viewBox="0 0 46 36">
          <path d="M14 8L36 2l7 12-22 8z" fill="#3c6da8" stroke="#222" strokeWidth="2" />
          <path d="M24 9l10-2 3 6-10 3z" fill="#6fcf5a" />
          <path d="M2 14l10-3 26 15-8 6z" fill="#d8a12c" stroke="#333" strokeWidth="2" />
          <path d="M10 26l8-8 12 4-8 13z" fill="#bbb" stroke="#333" strokeWidth="2" />
        </svg>
      </button>
      <span className="ml-[12px] h-[54px] w-[16px] shrink-0 bg-[repeating-linear-gradient(#c3b8a8_0_2px,transparent_2px_6px)]" />
      <div className="ml-[9px] flex shrink-0 gap-[8px]">
        {tasks.map((t) => (
          <button
            key={t.label}
            className={`flex h-[54px] w-[237px] items-center gap-[20px] overflow-hidden rounded-lg border-3 border-[#958978] pl-[17px] whitespace-nowrap ${
              t.active ? "bg-[#b3cbe3] font-bold text-black" : "bg-linear-to-b from-white to-[#e6e1da]"
            }`}
          >
            <svg className="h-[30px] w-[40px] shrink-0" viewBox="0 0 40 30">
              {t.icon === "terminal" ? (
                <>
                  <rect x="1" y="1" width="38" height="28" rx="4" fill="#b9b9b4" stroke="#8b8b87" strokeWidth="2" />
                  <rect x="8" y="6" width="24" height="16" fill="#9aa59c" stroke="#777" />
                </>
              ) : (
                <g opacity={t.icon === "dim" ? 0.55 : 1}>
                  <rect x="2" y="2" width="36" height="26" fill="#ececec" stroke="#1c1c1c" strokeWidth="3" />
                  <path d="M3 6h34" stroke="#35597f" strokeWidth="5" />
                </g>
              )}
            </svg>
            {t.label}
          </button>
        ))}
      </div>
      <span className="ml-[14px] h-[54px] w-[16px] shrink-0 bg-[repeating-linear-gradient(#c3b8a8_0_2px,transparent_2px_6px)]" />
      <time className="ml-auto shrink-0 whitespace-nowrap">4:57 PM</time>
      <svg className="ml-[37px] h-[42px] w-[60px] shrink-0" viewBox="0 0 60 42" fill="none">
        <path d="M1 21q0-6 7-8L24 2q8 0 8 19t-8 19L8 29q-7-2-7-8z" fill="#8b8b8b" stroke="#444" strokeWidth="2" />
        <ellipse cx="26" cy="21" rx="5" ry="15" fill="#d0d0d0" />
        <path d="M37 13q5 8 0 16M44 8q9 13 0 26M50 3q13 18 0 36" stroke="#2d5f9e" strokeWidth="4" />
      </svg>
      <div className="ml-[12px] flex h-[48px] shrink-0 gap-[4px]">
        <div className="flex w-[74px] items-center border-2 border-[#2f6fb0] bg-[#4a90d9]">
          <span className="h-full w-[26px] border-r-2 border-white bg-[#92c4f4]" />
          <span className="h-[28px] w-[30px] border-4 border-l-0 border-[#16202c] bg-[#dfe3e8]" />
        </div>
        <div className="w-[74px] bg-[#b0a490]" />
        <div className="w-[74px] bg-[#b0a490]" />
        <div className="w-[74px] bg-[#b0a490]" />
      </div>
    </div>
  );
}

export default function App() {
  return (
    <div className="flex h-screen flex-col overflow-hidden bg-white font-['Open_Sans','Noto_Sans_CJK_SC',sans-serif] text-[27px] leading-none text-black">
      <TitleBar />
      <Toolbar />
      <div className="flex min-h-0 flex-1 flex-col bg-[#e3e4e6]">
        <div className="flex min-h-0 flex-1">
          <Library />
          <main className="flex min-w-0 flex-1 flex-col border border-r-2 border-[#666]">
            <VmTabs />
            <div className="flex min-h-0 flex-1 flex-col">
              <div className="relative min-h-0 flex-1 overflow-hidden">
                <Wallpaper />
                <IcfbWindow />
                <SchematicWindow />
                <EditObjectProperties />
              </div>
              <GnomePanel />
            </div>
          </main>
        </div>
        <StatusBar />
      </div>
    </div>
  );
}
